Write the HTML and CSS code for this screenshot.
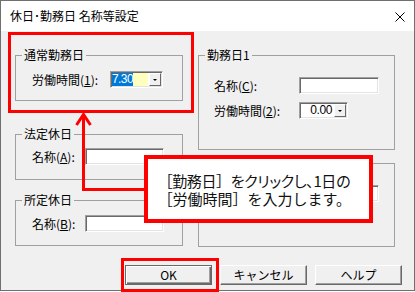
FILE: index.html
```html
<!DOCTYPE html>
<html lang="ja">

<head>
  <meta charset="UTF-8">
  <title>休日･勤務日 名称等設定</title>
  <link rel="stylesheet" href="styles.css">
</head>

<body>
  <div class="screen">
    <div class="window">
      <div class="titlebar">
        <span class="title">休日･勤務日 名称等設定</span>
        <svg class="close" width="10" height="10" viewBox="0 0 10 10">
          <path d="M0.5 0.5 L9.5 9.5 M9.5 0.5 L0.5 9.5" stroke="#000" stroke-width="1" fill="none" />
        </svg>
      </div>

      <div class="client">
        <div class="columns">
          <div class="col left">
            <fieldset class="group g-normal">
              <legend>通常勤務日</legend>
              <div class="row">
                <label class="wide">労働時間(<u>1</u>):</label>
                <div class="combo yellow">
                  <span class="sel">7.30</span>
                  <span class="fill"></span>
                  <span class="drop"></span>
                </div>
              </div>
            </fieldset>

            <fieldset class="group g-legal">
              <legend>法定休日</legend>
              <div class="row">
                <label>名称(<u>A</u>):</label>
                <div class="field"></div>
              </div>
            </fieldset>

            <fieldset class="group g-fixed">
              <legend>所定休日</legend>
              <div class="row">
                <label>名称(<u>B</u>):</label>
                <div class="field"></div>
              </div>
            </fieldset>
          </div>

          <div class="col right">
            <fieldset class="group g-work1">
              <legend>勤務日1</legend>
              <div class="row first">
                <label>名称(<u>C</u>):</label>
                <div class="field"></div>
              </div>
              <div class="row">
                <label>労働時間(<u>2</u>):</label>
                <div class="combo narrow">
                  <span class="num">0.00</span>
                  <span class="drop"></span>
                </div>
              </div>
            </fieldset>

            <!-- label and legend of this group sit under the callout -->
            <fieldset class="group g-work2">
              <legend class="blank"></legend>
              <div class="row first">
                <span class="spacer"></span>
                <div class="field"></div>
              </div>
            </fieldset>
          </div>
        </div>

        <div class="buttons">
          <button class="btn default">OK</button>
          <button class="btn">キャンセル</button>
          <button class="btn">ヘルプ</button>
        </div>
      </div>
    </div>

    <!-- annotations drawn over the dialog -->
    <div class="mark mark-group"></div>
    <svg class="arrow" width="80" height="90" viewBox="0 0 80 90">
      <path d="M78 81.5 H13.5 V6" stroke="#f00" stroke-width="3" fill="none" />
      <polyline points="6.5,17 13.5,6.5 20.5,17" stroke="#f00" stroke-width="3" fill="none" />
    </svg>
    <div class="callout">
      <div class="line1"><span class="tight">［</span>勤務日］<span class="tight">をクリックし、</span>1日の</div>
      <div><span class="tight">［</span>労働時間］を入力します。</div>
    </div>
    <div class="mark mark-ok"></div>
  </div>
</body>

</html>
```

FILE: styles.css
```css
body {
  margin: 0;
  background: #fff;
  font-family: "Noto Sans CJK JP", "Noto Sans", sans-serif;
  font-size: 12px;
  color: #000;
}

.screen {
  position: relative;
  width: 415px;
  height: 292px;
  overflow: hidden;
}

.window {
  width: 415px;
  height: 291px;
  box-sizing: border-box;
  border: 1px solid #707070;
  background: #f0f0f0;
  display: flex;
  flex-direction: column;
}

.titlebar {
  flex: none;
  height: 30px;
  background: #fff;
  display: flex;
  align-items: center;
  justify-content: space-between;
  padding: 0 9px 0 9px;
}

.title {
  line-height: 16px;
}

.close {
  margin-top: 2px;
}

.client {
  flex: 1;
  padding: 17px 0 0 14px;
}

.columns {
  display: flex;
  gap: 15px;
}

.col {
  display: flex;
  flex-direction: column;
}

.left {
  width: 168px;
}

.right {
  width: 197px;
}

.group {
  margin: 0;
  padding: 0 6px;
  min-width: 0;
  box-sizing: border-box;
  border: 1px solid #a0a0a0;
}

.group legend {
  padding: 0 2px;
  line-height: 14px;
}

.group legend.blank {
  height: 14px;
  width: 40px;
}

.g-normal { height: 53px; }
.g-legal { height: 53px; margin-top: 26px; }
.g-fixed { height: 53px; margin-top: 13px; }
.g-work1 { height: 102px; }
.g-work2 { height: 91px; margin-top: 6px; }

.row {
  display: flex;
  align-items: center;
  height: 17px;
  margin-top: 8px;
  padding-left: 10px;
}

.g-normal .row { margin-top: 9px; }
.g-legal .row { margin-top: 7px; }

.right .row { padding-left: 9px; }
.right .row.first { margin-top: 15px; }

.row label {
  flex: none;
  width: 53px;
  height: 14px;
  line-height: 14px;
  white-space: nowrap;
}

.row label.wide { width: 78px; }
.right .row label,
.right .row .spacer { flex: none; width: 85px; }

.field,
.combo {
  height: 17px;
  box-sizing: border-box;
  background: #fff;
  border-style: solid;
  border-width: 1px;
  border-color: #a0a0a0 #fff #fff #a0a0a0;
  box-shadow: inset 1px 1px 0 #696969, inset -1px -1px 0 #e3e3e3;
}

.field { width: 79px; }
.right .field { width: 80px; }

.combo {
  display: flex;
  padding: 1px;
  font-family: "Liberation Sans", Arial, sans-serif;
  font-size: 12px;
  line-height: 13px;
}

.combo.yellow { width: 53px; }
.combo.narrow { width: 49px; }

.sel {
  background: #0078d7;
  color: #fff;
  width: 21px;
  letter-spacing: -0.6px;
  overflow: hidden;
}

.yellow .fill {
  flex: 1;
  background: #ffffc0;
  margin-right: 1px;
}

.num {
  flex: 1;
  text-align: right;
  padding-right: 2px;
  letter-spacing: -0.4px;
}

.drop {
  flex: none;
  width: 12px;
  height: 13px;
  box-sizing: border-box;
  background: #f0f0f0;
  border: 1px solid;
  border-color: #fff #696969 #696969 #fff;
  display: flex;
  align-items: center;
  justify-content: center;
}

.drop::after {
  content: "";
  border-left: 2px solid transparent;
  border-right: 2px solid transparent;
  border-top: 2px solid #000;
}

.buttons {
  display: flex;
  justify-content: flex-end;
  gap: 8px;
  padding-right: 12px;
  margin-top: 18px;
}

.btn {
  width: 87px;
  height: 20px;
  padding: 0;
  box-sizing: border-box;
  font-family: "Noto Sans CJK JP", "Noto Sans", sans-serif;
  font-size: 12px;
  line-height: 16px;
  color: #000;
  background: #f0f0f0;
  border: 1px solid;
  border-color: #fff #696969 #696969 #fff;
  box-shadow: inset -1px -1px 0 #a0a0a0;
}

.btn.default {
  border-color: #696969;
  box-shadow: inset 1px 1px 0 #fff, inset -1px -1px 0 #696969, inset -2px -2px 0 #a0a0a0;
}

.mark {
  position: absolute;
  box-sizing: border-box;
  border: 3px solid #f00;
}

.mark-group {
  left: 8px;
  top: 32px;
  width: 186px;
  height: 81px;
}

.mark-ok {
  left: 121px;
  top: 258px;
  width: 98px;
  height: 34px;
}

.arrow {
  position: absolute;
  left: 70px;
  top: 108px;
}

.callout {
  position: absolute;
  left: 144px;
  top: 155px;
  width: 229px;
  height: 68px;
  box-sizing: border-box;
  border: 4px solid #f00;
  background: #fff;
  padding: 13px 0 0 17px;
  font-size: 15px;
  line-height: 18px;
  color: #111;
  white-space: nowrap;
}

.callout div {
  height: 18px;
}

.callout .line1 {
  letter-spacing: -0.35px;
}

.callout .tight {
  font-feature-settings: "palt";
}
```
